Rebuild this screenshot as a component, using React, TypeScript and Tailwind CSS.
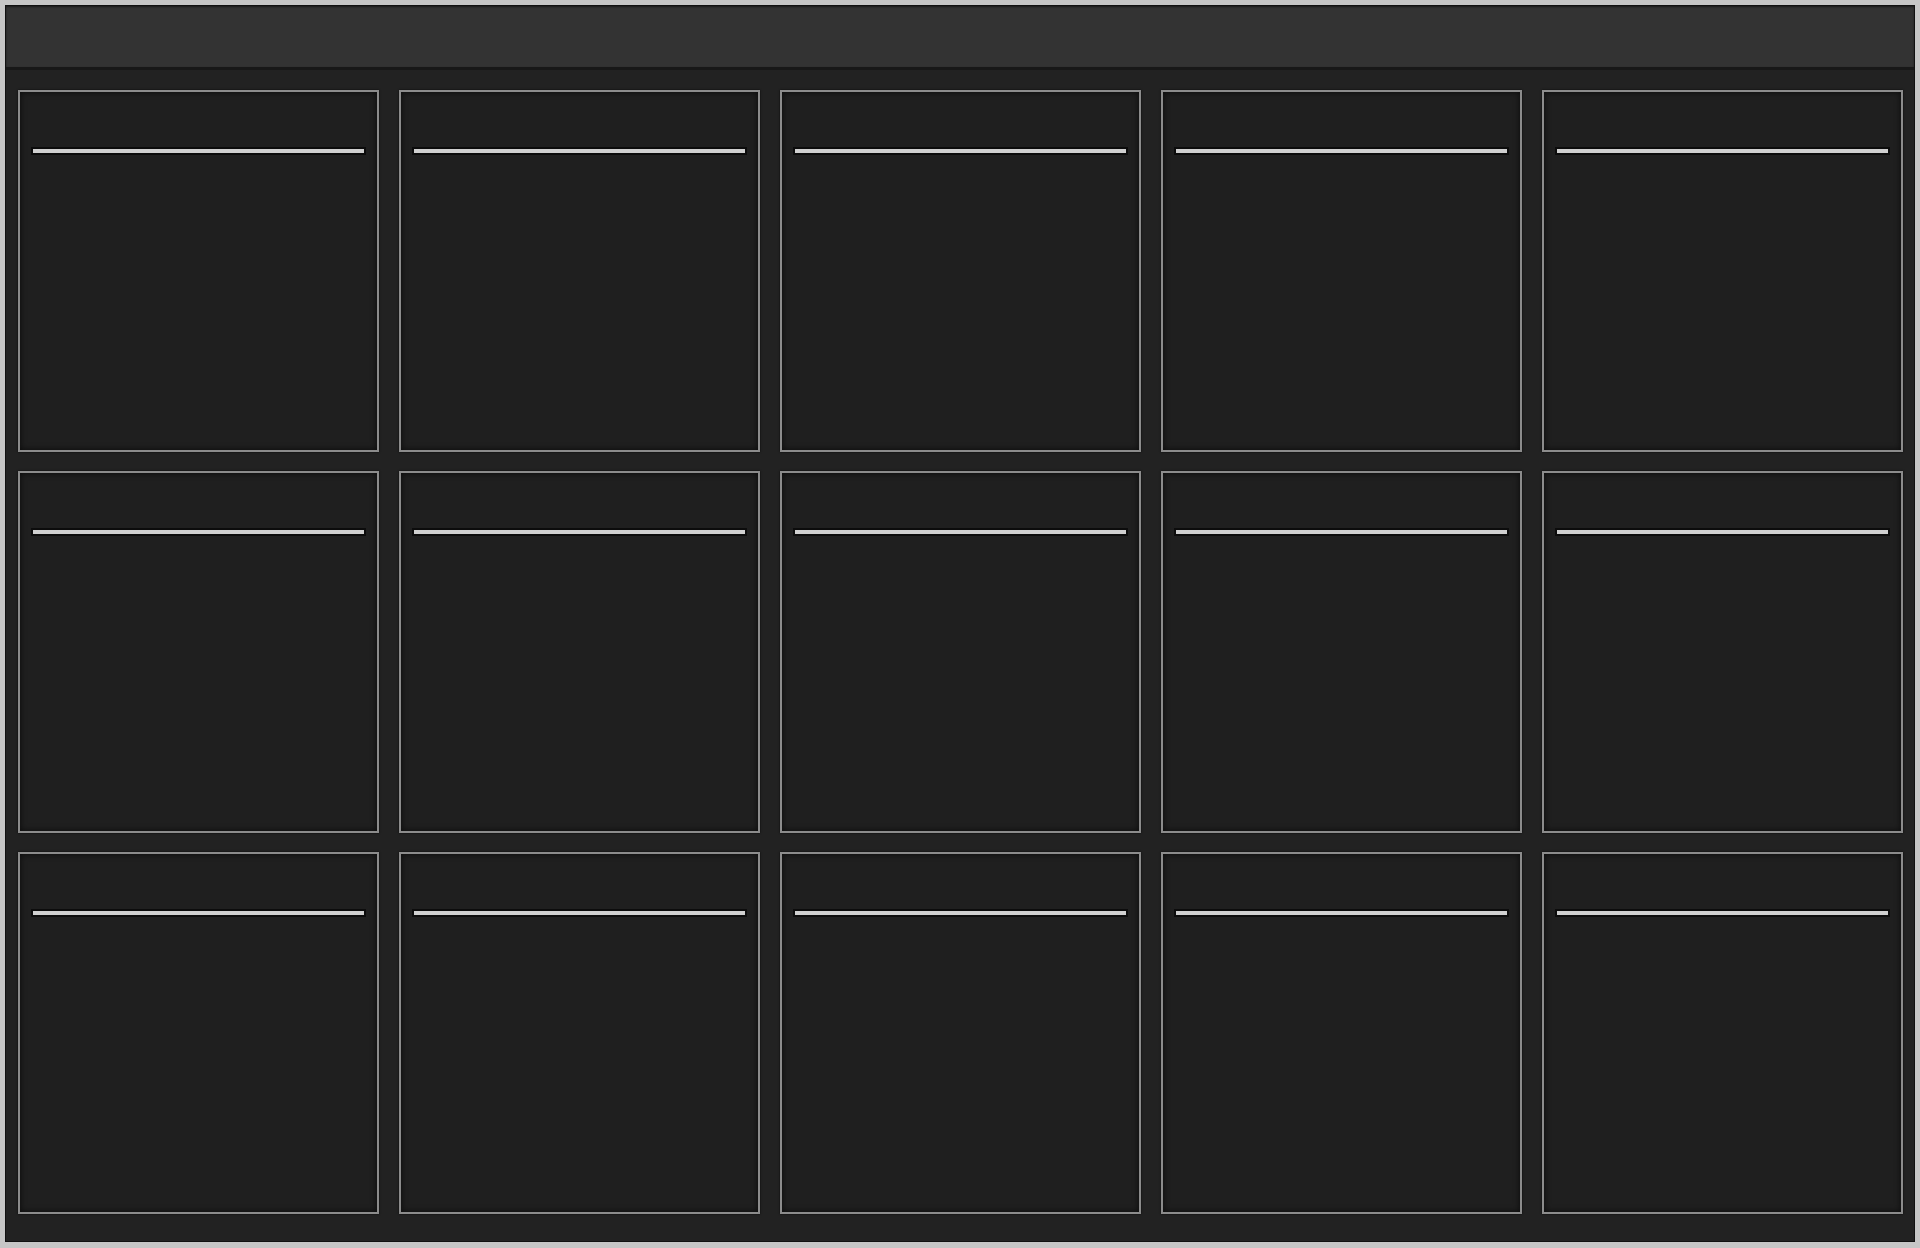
import React from 'react';

const cards = Array.from({ length: 15 }, (_, i) => i);

function Card() {
  return (
    <div className="h-[362px] border-2 border-[#8c8c8c] bg-[#1f1f1f] shadow-[inset_0_0_6px_rgba(0,0,0,0.7),0_0_2px_rgba(0,0,0,0.8)]">
      <div className="mx-[11px] mt-[55px] border border-[#0c0c0c] bg-[#0c0c0c] p-px">
        <div className="h-[4px] bg-[#d0d0d0]" />
      </div>
    </div>
  );
}

export default function App() {
  return (
    <div className="h-[1248px] w-[1920px] bg-[#c6c6c6] px-[5px] pb-[6px] pt-[5px]">
      <div className="flex h-full flex-col border border-[#111] bg-[#222]">
        {/* Header bar */}
        <div className="h-[64px] shrink-0 border-b-[3px] border-[#181818] bg-[#333] shadow-[inset_0_1px_2px_rgba(0,0,0,0.5)]" />

        {/* Card grid */}
        <div className="grid grid-cols-5 gap-x-[20px] gap-y-[19px] pl-[12px] pr-[11px] pt-[20px]">
          {cards.map((i) => (
            <Card key={i} />
          ))}
        </div>
      </div>
    </div>
  );
}
